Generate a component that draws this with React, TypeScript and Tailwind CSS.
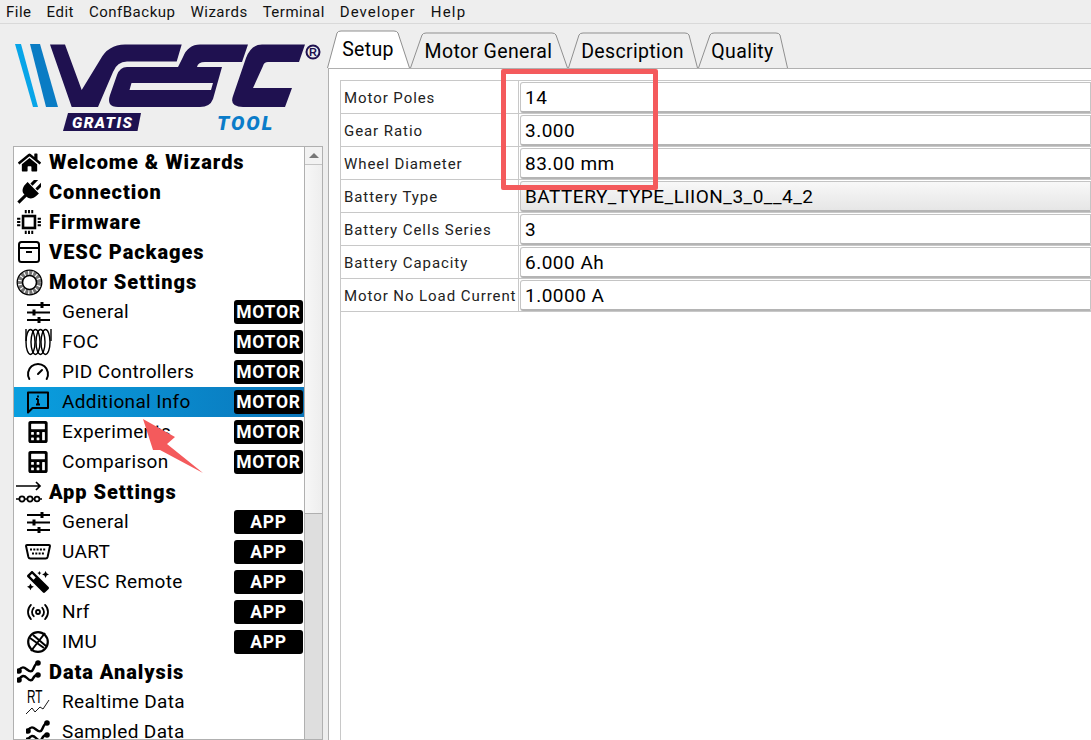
import React from "react";
import { FaHome, FaCalculator, FaMagic } from "react-icons/fa";
import { Gauge, Radio } from "lucide-react";

const Ic = ({ children, size = 24 }: { children: React.ReactNode; size?: number }) => (
  <svg width={size} height={size} viewBox="0 0 24 24" fill="none" stroke="currentColor" strokeWidth="2">{children}</svg>
);

const Plug = () => (
  <svg width="24" height="24" viewBox="0 0 24 24" fill="currentColor">
    <g transform="rotate(45 12 12)">
      <rect x="7" y="-3" width="3" height="8" />
      <rect x="14" y="-3" width="3" height="8" />
      <path d="M4 6h16v3c0 5-3 8-6 8h-4c-3 0-6-3-6-8z" />
      <rect x="10.500" y="16" width="3" height="11" />
    </g>
  </svg>
);
const Chip = () => (
  <Ic size={26}>
    <rect x="6.5" y="6.5" width="11" height="11" strokeWidth="2.4" />
    <path d="M9 1v3M12 1v3M15 1v3M9 20v3M12 20v3M15 20v3M1 9h3M1 12h3M1 15h3M20 9h3M20 12h3M20 15h3" strokeWidth="1.8" />
  </Ic>
);
const Box = () => (
  <Ic size={24}>
    <rect x="2" y="2" width="20" height="20" rx="2.5" strokeWidth="2" />
    <path d="M2 8h20M9 12h6" strokeWidth="2" />
  </Ic>
);
const Motor = () => (
  <svg width="27" height="27" viewBox="0 0 27 27" fill="none" stroke="currentColor">
    <circle cx="13.5" cy="13.5" r="12.3" strokeWidth="1.3" />
    <circle cx="13.5" cy="13.5" r="7" strokeWidth="1.6" />
    <circle cx="13.5" cy="13.5" r="9.7" strokeWidth="4.4" strokeDasharray="3 1.1" opacity="0.55" />
  </svg>
);
const Sliders = () => (
  <svg width="24" height="24" viewBox="0 0 24 24" fill="none" stroke="currentColor" strokeWidth="2">
    <path d="M1 5h23M1 12.500h23M1 20h23" />
    <path d="M16 2v6M8 9.500v6M13 17v6" strokeWidth="3" />
  </svg>
);
const Coil = () => (
  <svg width="27" height="28" viewBox="0 0 27 28" fill="none" stroke="currentColor" strokeWidth="1.400">
    <ellipse cx="5.500" cy="14" rx="4.500" ry="12.500" />
    <ellipse cx="10.500" cy="14" rx="4.500" ry="12.500" />
    <ellipse cx="15.500" cy="14" rx="4.500" ry="12.500" />
    <ellipse cx="20.500" cy="14" rx="4.500" ry="12.500" />
    <path d="M1 1v12M26 1v12" />
  </svg>
);
const Info = () => (
  <svg width="24" height="24" viewBox="0 0 24 24" fill="none" stroke="currentColor" strokeWidth="2">
    <path d="M2 2.500h20v15.500H6.500L2 22.500z" strokeLinejoin="round" />
    <path d="M12 5.500v2M12 9v5.500M10 9h2M10 14.500h4" strokeWidth="1.800" />
  </svg>
);
const AppIcon = () => (
  <svg width="26" height="26" viewBox="0 0 26 26" fill="none" stroke="currentColor" strokeWidth="1.700">
    <path d="M0 7h23M20 3l4 4-4 4" />
    <path d="M0 20h3M9 20h2M17 20h2M23 20h3" />
    <circle cx="6" cy="20" r="2.600" />
    <circle cx="14" cy="20" r="2.600" />
    <circle cx="21" cy="20" r="2.400" />
  </svg>
);
const Uart = () => (
  <svg width="26" height="18" viewBox="0 0 26 18" fill="none" stroke="currentColor">
    <path d="M2 2h22a1 1 0 0 1 1 1l-2.400 11a2 2 0 0 1-2 1.500H5.400a2 2 0 0 1-2-1.500L1 3a1 1 0 0 1 1-1z" strokeWidth="2" />
    <path d="M5 6.500h16M7 10.500h12" strokeWidth="2" strokeDasharray="2 1.300" />
  </svg>
);
const Imu = () => (
  <svg width="24" height="24" viewBox="0 0 24 24" fill="none" stroke="currentColor" strokeWidth="2.200">
    <circle cx="12" cy="12" r="9.800" />
    <path d="M19 3L5 21M4 8l14 10M7 5l13 11" strokeWidth="2" />
  </svg>
);
const Waves = () => (
  <svg width="24" height="24" viewBox="0 0 24 24" fill="none" stroke="currentColor" strokeWidth="2.400" strokeLinecap="round">
    <path d="M1.500 10.500C5 6 7 7 10 9.500s5 2.500 6 0 3-6 5-7.500" />
    <path d="M1.500 20C5 15 7 15 10 18s5 3 6 .5 3-3.500 5-3.500" />
    <circle cx="21" cy="3" r="1.600" fill="currentColor" />
    <circle cx="21" cy="15" r="1.600" fill="currentColor" />
    <circle cx="2" cy="11" r="1.600" fill="currentColor" />
    <circle cx="2" cy="20" r="1.600" fill="currentColor" />
  </svg>
);
const Rt = () => (
  <div className="relative w-[24px] h-[26px]">
    <span className="absolute left-[1px] top-[-2px] text-[19px] leading-[20px] font-['Liberation_Sans','DejaVu_Sans',sans-serif] scale-x-[0.62] origin-left">RT</span>
    <svg className="absolute left-0 top-0" width="24" height="26" viewBox="0 0 24 26" fill="none" stroke="currentColor" strokeWidth="0.900">
      <path d="M0 25l6-6 3 4 5-5 3 2 6-9" />
    </svg>
  </div>
);

type Row = { label: string; icon: React.ReactNode; head?: boolean; badge?: string; active?: boolean };
const rows: Row[] = [
  { label: "Welcome & Wizards", head: true, icon: <FaHome size={23} /> },
  { label: "Connection", head: true, icon: <Plug /> },
  { label: "Firmware", head: true, icon: <Chip /> },
  { label: "VESC Packages", head: true, icon: <Box /> },
  { label: "Motor Settings", head: true, icon: <Motor /> },
  { label: "General", badge: "MOTOR", icon: <Sliders /> },
  { label: "FOC", badge: "MOTOR", icon: <Coil /> },
  { label: "PID Controllers", badge: "MOTOR", icon: <Gauge size={24} strokeWidth={2} /> },
  { label: "Additional Info", badge: "MOTOR", active: true, icon: <Info /> },
  { label: "Experiments", badge: "MOTOR", icon: <FaCalculator size={22} /> },
  { label: "Comparison", badge: "MOTOR", icon: <FaCalculator size={22} /> },
  { label: "App Settings", head: true, icon: <AppIcon /> },
  { label: "General", badge: "APP", icon: <Sliders /> },
  { label: "UART", badge: "APP", icon: <Uart /> },
  { label: "VESC Remote", badge: "APP", icon: <FaMagic size={22} className="-scale-x-100" /> },
  { label: "Nrf", badge: "APP", icon: <Radio size={24} strokeWidth={1.8} /> },
  { label: "IMU", badge: "APP", icon: <Imu /> },
  { label: "Data Analysis", head: true, icon: <Waves /> },
  { label: "Realtime Data", icon: <Rt /> },
  { label: "Sampled Data", icon: <Waves /> },
];

const SideRow = ({ r }: { r: Row }) => (
  <div className={`flex items-center h-[30px] shrink-0 text-black ${r.active ? "bg-gradient-to-r from-[#0a9fdf] to-[#0a76bb]" : ""}`}>
    {r.head ? (
      <>
        <div className="w-[35px] pr-[5px] flex justify-center shrink-0">{r.icon}</div>
        <span className="text-[20px] font-black tracking-[0.950px] whitespace-nowrap">{r.label}</span>
      </>
    ) : (
      <>
        <div className="w-[48px] pl-[8px] pr-[8px] flex justify-center shrink-0">{r.icon}</div>
        <span className="text-[19px] pt-[1px] tracking-[0.350px] whitespace-nowrap">{r.label}</span>
      </>
    )}
    {r.badge && (
      <span className="ml-auto mr-[1px] w-[69px] h-[24px] pt-[1px] rounded-[3px] bg-black text-white text-[17.500px] font-bold tracking-[0.800px] flex items-center justify-center">
        {r.badge}
      </span>
    )}
  </div>
);

const Logo = () => (
  <svg width="328" height="122" viewBox="0 24 328 122" className="shrink-0">
    <polygon points="15,44 21,44 38,107 33,107" fill="#08a5e8" />
    <polygon points="30,44 40,44 58,107 46,107" fill="#0a7cc4" />
    <path fill="#1f1150" d="M50,44.500 L65,44.500 L81.700,90 L100,60 Q108,44.500 125,44.500 L181.700,44.500 L176.700,61.500 L127,61.500 Q117,61.500 113,72 L98,107 L71.700,107 Z" />
    <path fill="#1f1150" fillRule="evenodd" d="M127,67 L178,67 L183,57 Q188,44.500 200,44.500 L248,44.500 L242,62 L205,62 Q198,62 197,67 L222,67 L213,99 Q210,107 200,107 L118,107 Q106,107 110,95 L117,75 Q120,67 127,67 Z M131.500,83 L213,83 L211,90 L129.500,90 Z" />
    <path fill="#1f1150" d="M262,44.500 L305,44.500 L299,62 L268,62 Q264,62 263,66 L253,88 L292,88 L285,107 L243,107 Q229,107 233,96 L246,58 Q251,44.500 262,44.500 Z" />
    <circle cx="313" cy="52" r="6.500" fill="none" stroke="#1f1150" strokeWidth="2" />
    <text x="313" y="56" textAnchor="middle" fontSize="11" fontWeight="700" fill="#1f1150" fontFamily="Liberation Sans, sans-serif">R</text>
    <polygon points="68,113 141,113 137.500,131 63,131" fill="#1f1150" />
    <text x="72" y="127.500" fontSize="15.500" fontWeight="900" fontStyle="italic" letterSpacing="1.400" fill="#fff" fontFamily="Roboto, sans-serif">GRATIS</text>
    <text x="217" y="130" fontSize="20" fontWeight="900" fontStyle="italic" letterSpacing="2" fill="#0a7cc9" fontFamily="Roboto, sans-serif">TOOL</text>
  </svg>
);

const Tab = ({ label, w, active, d, vb }: { label: string; w: string; active?: boolean; d: string; vb: string }) => (
  <div className={`relative h-[38px] shrink-0 ${w}`}>
    <svg className="absolute inset-0 w-full h-full" viewBox={vb} fill={active ? "#ffffff" : "#eeeeee"} stroke="#8f8f8f" strokeWidth="1">
      <path d={d} />
    </svg>
    <span className={`absolute inset-0 flex items-center justify-center pr-[1px] text-[19.500px] tracking-[0.350px] text-black ${active ? "pt-[2px]" : "pt-[5px]"}`}>{label}</span>
  </div>
);

const fields = [
  { label: "Motor Poles", value: "14" },
  { label: "Gear Ratio", value: "3.000" },
  { label: "Wheel Diameter", value: "83.00 mm" },
  { label: "Battery Type", value: "BATTERY_TYPE_LIION_3_0__4_2", combo: true },
  { label: "Battery Cells Series", value: "3" },
  { label: "Battery Capacity", value: "6.000 Ah" },
  { label: "Motor No Load Current", value: "1.0000 A" },
];

const menus = [
  { t: "File", c: "tracking-[0.500px]" },
  { t: "Edit", c: "tracking-[0.500px]" },
  { t: "ConfBackup", c: "tracking-[0.500px]" },
  { t: "Wizards", c: "tracking-[0.500px]" },
  { t: "Terminal", c: "tracking-[0.500px]" },
  { t: "Developer", c: "tracking-[1.050px]" },
  { t: "Help", c: "tracking-[1.200px]" },
];

export default function App() {
  return (
    <div className="relative w-[1091px] h-[740px] overflow-hidden bg-[#eeeeee] font-['Roboto','Liberation_Sans',sans-serif] flex flex-col">
      <div className="h-[24px] shrink-0 border-b border-[#d9d9d9] flex items-center pl-[6px] pt-[1px] gap-[15px] text-[15px] text-[#111]">
        {menus.map((m) => (
          <span key={m.t} className={m.c}>{m.t}</span>
        ))}
      </div>
      <div className="flex flex-1 min-h-0">
        <div className="w-[328px] shrink-0 flex flex-col">
          <Logo />
          <div className="flex flex-1 min-h-0 pl-[13px] pr-[5px]">
            <div className="flex-1 min-w-0 bg-white border border-[#b0b0b0] flex flex-col overflow-hidden">
              {rows.map((r, i) => (
                <SideRow key={i} r={r} />
              ))}
            </div>
            <div className="w-[18px] shrink-0 border-t border-r border-b border-[#b0b0b0] flex flex-col bg-[#dedede]">
              <div className="h-[18px] shrink-0 border-b border-[#c4c4c4] bg-[#f2f2f2] flex items-center justify-center">
                <div className="w-0 h-0 border-l-[5px] border-r-[5px] border-b-[5px] border-l-transparent border-r-transparent border-b-[#777]" />
              </div>
              <div className="h-[349px] shrink-0 border-b border-[#b0b0b0] bg-gradient-to-r from-[#f7f7f7] to-[#eeeeee]" />
            </div>
          </div>
        </div>
        <div className="flex-1 min-w-0 flex flex-col">
          <div className="flex items-end -ml-[1px] h-[44px] shrink-0">
            <Tab label="Setup" w="w-[83px]" active vb="0 0 83 38" d="M0.500,38 L10,3 Q11,1 14,1 L67,1 Q70,1 71,3 L82.500,38" />
            <Tab label="Motor General" w="w-[158px]" vb="0 0 158 38" d="M0.500,38 L12,5 Q13,3 16,3 L142,3 Q145,3 146,5 L157.500,38" />
            <Tab label="Description" w="w-[130px]" vb="0 0 130 38" d="M0.500,38 L11,5 Q12,3 15,3 L117,3 Q120,3 121,5 L129.500,38" />
            <Tab label="Quality" w="w-[90px]" vb="0 0 90 38" d="M0.500,38 L12,5 Q13,3 16,3 L78,3 Q81,3 82,5 L89.500,38" />
          </div>
          <div className="flex-1 min-h-0 bg-white border-l border-t border-[#b0b0b0] pl-[11px] pt-[11px]">
            <div className="h-full border-l border-t border-[#c8c8c8] flex flex-col">
              {fields.map((f) => (
                <div key={f.label} className="flex h-[33px] shrink-0 border-b border-[#c8c8c8]">
                  <div className="w-[178px] shrink-0 border-r border-[#c8c8c8] pl-[3px] pt-[2px] flex items-center text-[15px] tracking-[0.930px] text-[#222] whitespace-nowrap">
                    {f.label}
                  </div>
                  <div className={`flex-1 min-w-0 ml-[1px] mt-[1px] h-[31px] pt-[3px] rounded-l-[3px] border border-[#c4c4c4] border-b-[2px] border-b-[#b4b4b4] pl-[4px] flex items-center text-[19px] tracking-[0.500px] text-black whitespace-nowrap ${f.combo ? "bg-gradient-to-b from-[#f8f8f8] to-[#e6e6e6]" : "bg-white"}`}>
                    {f.value}
                  </div>
                </div>
              ))}
            </div>
          </div>
        </div>
      </div>
      <div className="absolute left-[501px] top-[69px] w-[157px] h-[121px] border-[5px] border-[#f45a5c] rounded-[2px]" />
      <svg className="absolute left-0 top-0 pointer-events-none" width="1091" height="740">
        <polygon points="143,419 175,437 167,444 203,473 160,450 153,450" fill="#f45a5c" />
      </svg>
    </div>
  );
}
